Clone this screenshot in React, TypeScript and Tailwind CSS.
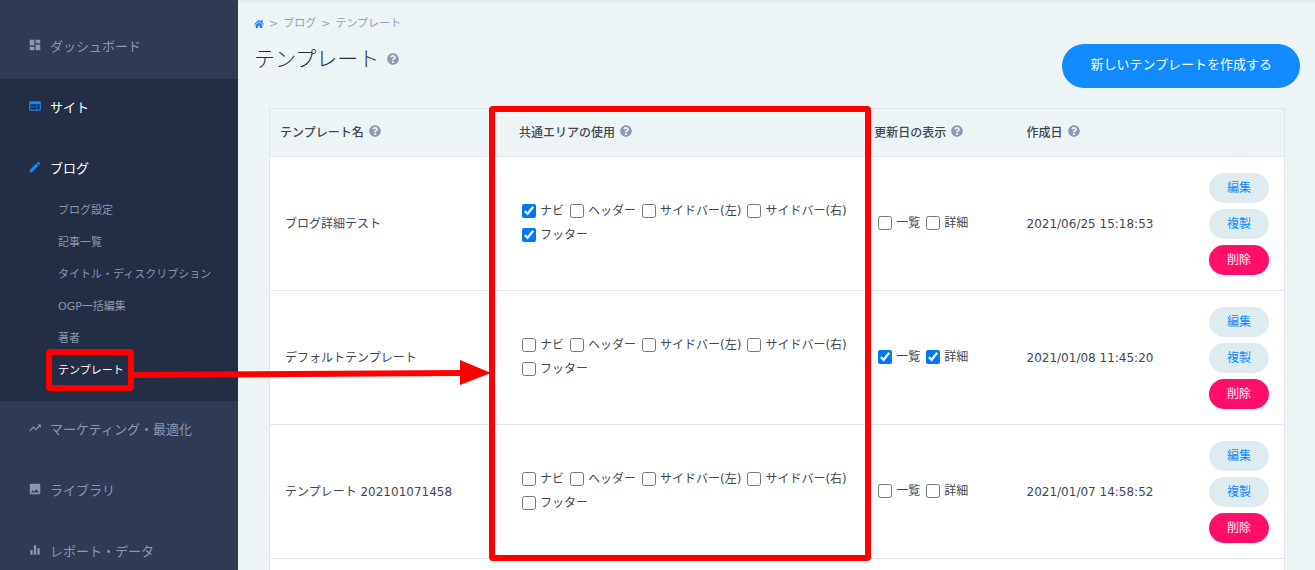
import React from "react";
import { FaHome, FaQuestionCircle } from "react-icons/fa";
import {
	MdDashboard,
	MdEdit,
	MdEqualizer,
	MdImage,
	MdTrendingUp,
	MdWeb,
} from "react-icons/md";
import type { IconType } from "react-icons";

const blogLinks = [
	"ブログ設定",
	"記事一覧",
	"タイトル・ディスクリプション",
	"OGP一括編集",
	"著者",
	"テンプレート",
];

const areas = ["ナビ", "ヘッダー", "サイドバー(左)", "サイドバー(右)", "フッター"];
const dateTargets = ["一覧", "詳細"];

const templates = [
	{
		name: "ブログ詳細テスト",
		areas: ["ナビ", "フッター"],
		dates: [] as string[],
		createdAt: "2021/06/25 15:18:53",
	},
	{
		name: "デフォルトテンプレート",
		areas: [] as string[],
		dates: ["一覧", "詳細"],
		createdAt: "2021/01/08 11:45:20",
	},
	{
		name: "テンプレート 202101071458",
		areas: [] as string[],
		dates: [] as string[],
		createdAt: "2021/01/07 14:58:52",
	},
];

const NavItem = ({
	icon: Icon,
	label,
	active,
}: {
	icon: IconType;
	label: string;
	active?: boolean;
}) => (
	<a
		href="#"
		className={`flex items-start gap-2 pl-7 pt-[18px] text-[13px] leading-[21px] ${
			active ? "text-white" : "text-[#8a97b1]"
		}`}
	>
		<Icon size={14} className={`mt-[2px] ${active ? "text-[#118bff]" : ""}`} />
		{label}
	</a>
);

const Sidebar = () => (
	<nav className="w-[238px] shrink-0 bg-[#2f3a54] pt-[18px]">
		<ul>
			<li className="h-[61px]">
				<NavItem icon={MdDashboard} label="ダッシュボード" />
			</li>
			<li className="h-[61px] bg-[#232d44]">
				<NavItem icon={MdWeb} label="サイト" active />
			</li>
			<li className="bg-[#232d44] pb-[14px]">
				<NavItem icon={MdEdit} label="ブログ" active />
				<ul className="pl-[58px] pt-4">
					{blogLinks.map((label) => (
						<li key={label}>
							<a
								href="#"
								className={`block text-[11px] leading-8 ${
									label === "テンプレート" ? "text-white" : "text-[#8a97b1]"
								}`}
							>
								{label}
							</a>
						</li>
					))}
				</ul>
			</li>
			<li className="h-[61px]">
				<NavItem icon={MdTrendingUp} label="マーケティング・最適化" />
			</li>
			<li className="h-[61px]">
				<NavItem icon={MdImage} label="ライブラリ" />
			</li>
			<li className="h-[61px]">
				<NavItem icon={MdEqualizer} label="レポート・データ" />
			</li>
		</ul>
	</nav>
);

const Help = () => (
	<FaQuestionCircle size={12} className="shrink-0 text-[#8e9ab1]" />
);

const Check = ({ label, checked }: { label: string; checked: boolean }) => (
	<label className="flex items-center gap-1 leading-6">
		<input type="checkbox" defaultChecked={checked} className="size-[14px]" />
		{label}
	</label>
);

const HeadCell = ({ label }: { label: string }) => (
	<th className="px-[10px] text-left font-medium">
		<span className="flex items-start gap-[5px] leading-4">
			{label}
			<Help />
		</span>
	</th>
);

const TemplateTable = () => (
	<table className="w-full table-fixed border border-[#e2e6e9] text-[12px] text-[#3f4650]">
		<colgroup>
			<col className="w-[23.6%]" />
			<col className="w-[35%]" />
			<col className="w-[15%]" />
			<col className="w-[17%]" />
			<col />
		</colgroup>
		<thead>
			<tr className="h-12 border-b border-[#e2e6e9]">
				<HeadCell label="テンプレート名" />
				<HeadCell label="共通エリアの使用" />
				<HeadCell label="更新日の表示" />
				<HeadCell label="作成日" />
				<th />
			</tr>
		</thead>
		<tbody className="bg-white">
			{templates.map((template) => (
				<tr key={template.name} className="h-[134px] border-b border-[#e2e6e9]">
					<td className="px-[15px]">{template.name}</td>
					<td className="px-[13px] pb-[2px]">
						<div className="flex flex-wrap gap-x-[6px]">
							{areas.map((area) => (
								<Check
									key={area}
									label={area}
									checked={template.areas.includes(area)}
								/>
							))}
						</div>
					</td>
					<td className="px-[14px] pb-[2px]">
						<div className="flex gap-x-[6px]">
							{dateTargets.map((target) => (
								<Check
									key={target}
									label={target}
									checked={template.dates.includes(target)}
								/>
							))}
						</div>
					</td>
					<td className="px-[10px]">{template.createdAt}</td>
					<td className="px-[15px]">
						<div className="flex flex-col items-end gap-[6px]">
							<button className="h-[30px] w-[60px] rounded-full bg-[#deecf0] text-[#118bff]">
								編集
							</button>
							<button className="h-[30px] w-[60px] rounded-full bg-[#deecf0] text-[#118bff]">
								複製
							</button>
							<button className="h-[30px] w-[60px] rounded-full bg-[#ff0f69] text-white">
								削除
							</button>
						</div>
					</td>
				</tr>
			))}
			<tr className="h-[134px]">
				<td colSpan={5} />
			</tr>
		</tbody>
	</table>
);

// Red frames and arrow pointing from the menu entry to the table column
const Annotations = () => (
	<div className="pointer-events-none absolute inset-0">
		<div className="absolute left-[46px] top-[349px] h-[42px] w-[88px] rounded-[4px] border-[6px] border-[#ff0000]" />
		<div className="absolute left-[489px] top-[106px] h-[455px] w-[382px] rounded-[4px] border-[6px] border-[#ff0000]" />
		<svg
			className="absolute left-[130px] top-[355px]"
			width="364"
			height="36"
			viewBox="0 0 364 36"
		>
			<path d="M2 20L332 18" stroke="#ff0000" strokeWidth="6" />
			<path d="M330 5L361 18L330 30Z" fill="#ff0000" />
		</svg>
	</div>
);

const App = () => {
	return (
		<div className="relative flex h-screen overflow-hidden bg-[#ecf4f6] font-['DejaVu_Sans','Noto_Sans_CJK_JP',sans-serif]">
			<Sidebar />
			<main className="min-w-0 flex-1 border-t-2 border-[#e4eaed]">
				<div className="flex items-center gap-[5px] px-4 pt-[13px] text-[11px] leading-[18px] text-[#98a1ad]">
					<a href="#" aria-label="ホーム" className="text-[#118bff]">
						<FaHome size={10} />
					</a>
					<span>&gt;</span>
					<a href="#">ブログ</a>
					<span>&gt;</span>
					<span>テンプレート</span>
				</div>
				<div className="flex items-start justify-between pl-4 pr-[15px]">
					<h1 className="flex items-center gap-2 pt-[11px] text-[21px] font-light leading-[30px] text-[#232d44]">
						テンプレート
						<Help />
					</h1>
					<button className="mt-[11px] h-11 rounded-full bg-[#118bff] px-7 pb-[2px] text-[13px] text-white">
						新しいテンプレートを作成する
					</button>
				</div>
				<div className="pl-[31px] pr-[30px] pt-5">
					<TemplateTable />
				</div>
			</main>
			<Annotations />
		</div>
	);
};

export default App;
